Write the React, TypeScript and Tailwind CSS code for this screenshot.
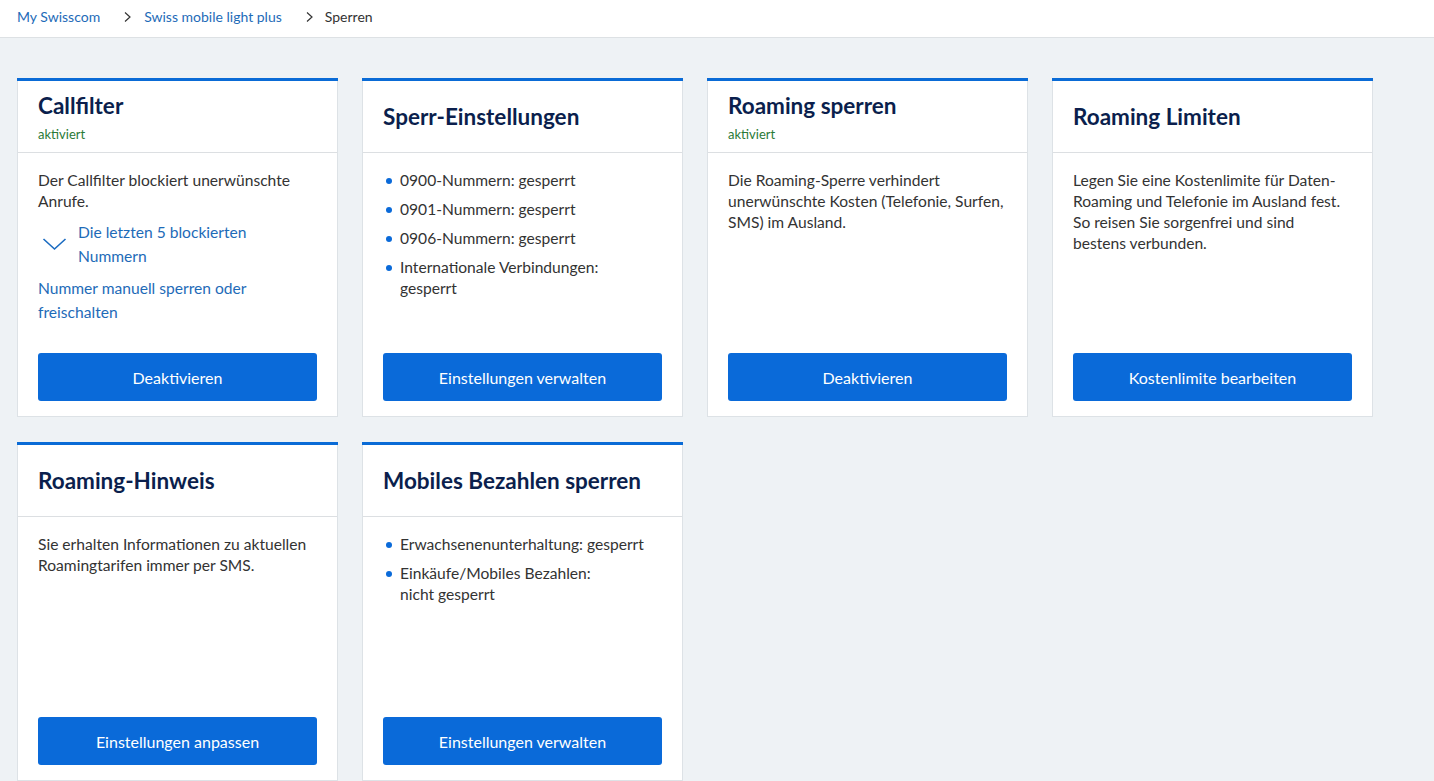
import React from "react";

const Chevron = () => (
  <svg width="9" height="12" viewBox="0 0 9 12" className="shrink-0">
    <path d="M2 1.5 L7 6 L2 10.5" fill="none" stroke="#333" strokeWidth="1.2" />
  </svg>
);

const Down = () => (
  <svg width="25" height="14" viewBox="0 0 25 14" className="shrink-0">
    <path d="M1.5 2 L12.5 12 L23.5 2" fill="none" stroke="#1a6bc1" strokeWidth="1.6" />
  </svg>
);

type CardProps = {
  title: string;
  sub?: string;
  button: string;
  children: React.ReactNode;
};

const Card = ({ title, sub, button, children }: CardProps) => (
  <div className="flex h-[339px] flex-col border-t-[3px] border-t-[#0a6bd6] bg-white">
    <div className="flex flex-1 flex-col border-x border-b border-[#dde2e6]">
      <div className="flex h-[72px] flex-col justify-center border-b border-[#dcdfe2] px-[20px] pt-[1px]">
        <div className="text-[22.5px] font-bold leading-[28px] text-[#0b1f4d]">{title}</div>
        {sub && <div className="mt-[5px] text-[13px] leading-[18px] text-[#2a7a36]">{sub}</div>}
      </div>
      <div className="flex flex-1 flex-col px-[20px] pb-[15px] pt-[17px] text-[15.6px] leading-[21px] text-[#333]">
        <div className="flex-1">{children}</div>
        <button className="h-[48px] w-full rounded-[3px] bg-[#0a6ad9] text-[16px] text-white">{button}</button>
      </div>
    </div>
  </div>
);

const Bullets = ({ items }: { items: React.ReactNode[] }) => (
  <ul className="flex flex-col gap-[8px]">
    {items.map((it, i) => (
      <li key={i} className="flex">
        <span className="ml-[3px] mr-[8px] mt-[8px] h-[6px] w-[6px] shrink-0 rounded-full bg-[#0a6ad9]" />
        <span>{it}</span>
      </li>
    ))}
  </ul>
);

export default function App() {
  return (
    <div
      className="min-h-[781px] bg-[#eef2f5]"
      style={{ fontFamily: "Lato, 'Open Sans', sans-serif" }}
    >
      <div className="flex h-[38px] items-center border-b border-[#dde1e4] bg-white px-[17px] pb-[4px] text-[14px] text-[#333]">
        <span className="text-[#1e6bb8]">My Swisscom</span>
        <span className="ml-[23px] mr-[12px] flex">
          <Chevron />
        </span>
        <span className="text-[#1e6bb8]">Swiss mobile light plus</span>
        <span className="ml-[23px] mr-[11px] flex">
          <Chevron />
        </span>
        <span>Sperren</span>
      </div>
      <div className="grid grid-cols-[repeat(4,321px)] gap-x-[24px] gap-y-[25px] px-[17px] pt-[40px]">
        <Card title="Callfilter" sub="aktiviert" button="Deaktivieren">
          <p>Der Callfilter blockiert unerwünschte Anrufe.</p>
          <div className="mt-[8px] flex items-center leading-[24px] text-[#1e6bb8]">
            <span className="ml-[4px] mr-[11px] flex">
              <Down />
            </span>
            <span>
              Die letzten 5 blockierten
              <br />
              Nummern
            </span>
          </div>
          <p className="mt-[8px] pr-[40px] leading-[24px] text-[#1e6bb8]">
            Nummer manuell sperren oder freischalten
          </p>
        </Card>
        <Card title="Sperr-Einstellungen" button="Einstellungen verwalten">
          <Bullets
            items={[
              "0900-Nummern: gesperrt",
              "0901-Nummern: gesperrt",
              "0906-Nummern: gesperrt",
              <>
                Internationale Verbindungen:
                <br />
                gesperrt
              </>,
            ]}
          />
        </Card>
        <Card title="Roaming sperren" sub="aktiviert" button="Deaktivieren">
          <p>
            Die Roaming-Sperre verhindert
            <br />
            unerwünschte Kosten (Telefonie, Surfen,
            <br />
            SMS) im Ausland.
          </p>
        </Card>
        <Card title="Roaming Limiten" button="Kostenlimite bearbeiten">
          <p>
            Legen Sie eine Kostenlimite für Daten-
            <br />
            Roaming und Telefonie im Ausland fest.
            <br />
            So reisen Sie sorgenfrei und sind
            <br />
            bestens verbunden.
          </p>
        </Card>
        <Card title="Roaming-Hinweis" button="Einstellungen anpassen">
          <p>
            Sie erhalten Informationen zu aktuellen
            <br />
            Roamingtarifen immer per SMS.
          </p>
        </Card>
        <Card title="Mobiles Bezahlen sperren" button="Einstellungen verwalten">
          <Bullets
            items={[
              "Erwachsenenunterhaltung: gesperrt",
              <>
                Einkäufe/Mobiles Bezahlen:
                <br />
                nicht gesperrt
              </>,
            ]}
          />
        </Card>
      </div>
    </div>
  );
}
